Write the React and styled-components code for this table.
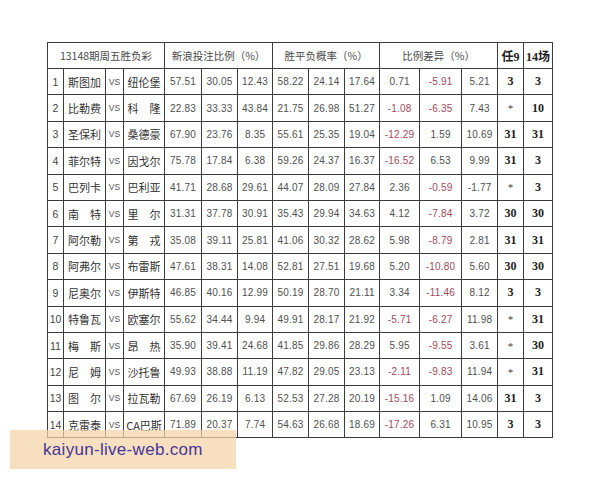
import React from 'react';
import styled, { createGlobalStyle } from 'styled-components';

const GlobalStyle = createGlobalStyle`
    html, body {
        margin: 0;
        padding: 0;
        background: #ffffff;
    }
`;

const Page = styled.div`
    position: relative;
    width: 600px;
    height: 480px;
    padding: 42px 0 0 47px;
    box-sizing: border-box;
    font-family: "Liberation Sans", "Noto Sans CJK SC", sans-serif;
    color: #3a3a3a;
`;

const Table = styled.table`
    border-collapse: collapse;
    table-layout: fixed;
    width: 506px;
    border: 1px solid #3c3c3c;
`;

const Row = styled.tr`
    height: ${p => p.$h}px;
`;

const HeadCell = styled.th`
    border: 1px solid #3c3c3c;
    padding: 0;
    font-weight: normal;
    font-size: 10.5px;
    font-family: "Noto Sans CJK SC", sans-serif;
    color: #4a4a4a;
    text-align: center;
    white-space: nowrap;
    overflow: hidden;
    ${p => p.$bold && `
        font-family: "Liberation Serif", "Noto Sans CJK SC", serif;
        font-weight: bold;
        font-size: 12px;
        color: #1e1e1e;
    `}
`;

const kindStyles = {
    num: `font-size: 10.5px; color: #444;`,
    name: `font-family: "Noto Sans CJK SC", sans-serif; font-size: 11px; color: #333;`,
    vs: `font-size: 8.5px; color: #555;`,
    value: `font-size: 10px; letter-spacing: 0.2px; color: #505050;`,
    pick: `font-family: "Liberation Serif", serif; font-weight: bold; font-size: 12px; color: #1e1e1e;`,
};

const Cell = styled.td`
    border: 1px solid #3c3c3c;
    padding: 0;
    text-align: center;
    white-space: nowrap;
    overflow: hidden;
    ${p => kindStyles[p.$kind]}
    ${p => p.$red && `color: #a24a5c;`}
    ${p => p.$light && `font-weight: normal; font-size: 11px; color: #444;`}
`;

const Watermark = styled.div`
    position: absolute;
    left: 10px;
    top: 430px;
    width: 226px;
    height: 39px;
    background: rgba(244, 210, 166, 0.72);
    display: flex;
    align-items: center;
    padding-left: 33px;
    box-sizing: border-box;
    font-family: "Liberation Sans", sans-serif;
    font-size: 17px;
    color: #45369a;
    letter-spacing: 0.3px;
`;

const widths = [16, 42, 18, 41, 37, 36, 35, 36, 36, 35, 40, 42, 36, 26, 29];

const rows = [
    ['斯图加', '纽伦堡', '57.51', '30.05', '12.43', '58.22', '24.14', '17.64', '0.71', '-5.91', '5.21', '3', '3'],
    ['比勒费', '科　隆', '22.83', '33.33', '43.84', '21.75', '26.98', '51.27', '-1.08', '-6.35', '7.43', '*', '10'],
    ['圣保利', '桑德豪', '67.90', '23.76', '8.35', '55.61', '25.35', '19.04', '-12.29', '1.59', '10.69', '31', '31'],
    ['菲尔特', '因戈尔', '75.78', '17.84', '6.38', '59.26', '24.37', '16.37', '-16.52', '6.53', '9.99', '31', '3'],
    ['巴列卡', '巴利亚', '41.71', '28.68', '29.61', '44.07', '28.09', '27.84', '2.36', '-0.59', '-1.77', '*', '3'],
    ['南　特', '里　尔', '31.31', '37.78', '30.91', '35.43', '29.94', '34.63', '4.12', '-7.84', '3.72', '30', '30'],
    ['阿尔勒', '第　戎', '35.08', '39.11', '25.81', '41.06', '30.32', '28.62', '5.98', '-8.79', '2.81', '31', '31'],
    ['阿弗尔', '布雷斯', '47.61', '38.31', '14.08', '52.81', '27.51', '19.68', '5.20', '-10.80', '5.60', '30', '30'],
    ['尼奥尔', '伊斯特', '46.85', '40.16', '12.99', '50.19', '28.70', '21.11', '3.34', '-11.46', '8.12', '3', '3'],
    ['特鲁瓦', '欧塞尔', '55.62', '34.44', '9.94', '49.91', '28.17', '21.92', '-5.71', '-6.27', '11.98', '*', '31'],
    ['梅　斯', '昂　热', '35.90', '39.41', '24.68', '41.85', '29.86', '28.29', '5.95', '-9.55', '3.61', '*', '30'],
    ['尼　姆', '沙托鲁', '49.93', '38.88', '11.19', '47.82', '29.05', '23.13', '-2.11', '-9.83', '11.94', '*', '31'],
    ['图　尔', '拉瓦勒', '67.69', '26.19', '6.13', '52.53', '27.28', '20.19', '-15.16', '1.09', '14.06', '31', '3'],
    ['克雷泰', 'CA巴斯', '71.89', '20.37', '7.74', '54.63', '26.68', '18.69', '-17.26', '6.31', '10.95', '3', '3'],
];

export default function App() {
    return (
        <Page>
            <GlobalStyle />
            <Table>
                <colgroup>
                    {widths.map((w, i) => <col key={i} style={{ width: w }} />)}
                </colgroup>
                <thead>
                    <Row $h={26}>
                        <HeadCell colSpan={4}>13148期周五胜负彩</HeadCell>
                        <HeadCell colSpan={3}>新浪投注比例（%）</HeadCell>
                        <HeadCell colSpan={3}>胜平负概率（%）</HeadCell>
                        <HeadCell colSpan={3}>比例差异（%）</HeadCell>
                        <HeadCell $bold>任9</HeadCell>
                        <HeadCell $bold>14场</HeadCell>
                    </Row>
                </thead>
                <tbody>
                    {rows.map((r, i) => (
                        <Row key={i} $h={26.4}>
                            <Cell $kind="num">{i + 1}</Cell>
                            <Cell $kind="name">{r[0]}</Cell>
                            <Cell $kind="vs">VS</Cell>
                            <Cell $kind="name">{r[1]}</Cell>
                            {r.slice(2, 11).map((v, j) => (
                                <Cell key={j} $kind="value" $red={j >= 6 && j <= 7 && v.startsWith('-')}>
                                    {v}
                                </Cell>
                            ))}
                            <Cell $kind="pick" $light={r[11] === '*'}>{r[11]}</Cell>
                            <Cell $kind="pick">{r[12]}</Cell>
                        </Row>
                    ))}
                </tbody>
            </Table>
            <Watermark>kaiyun-live-web.com</Watermark>
        </Page>
    );
}
